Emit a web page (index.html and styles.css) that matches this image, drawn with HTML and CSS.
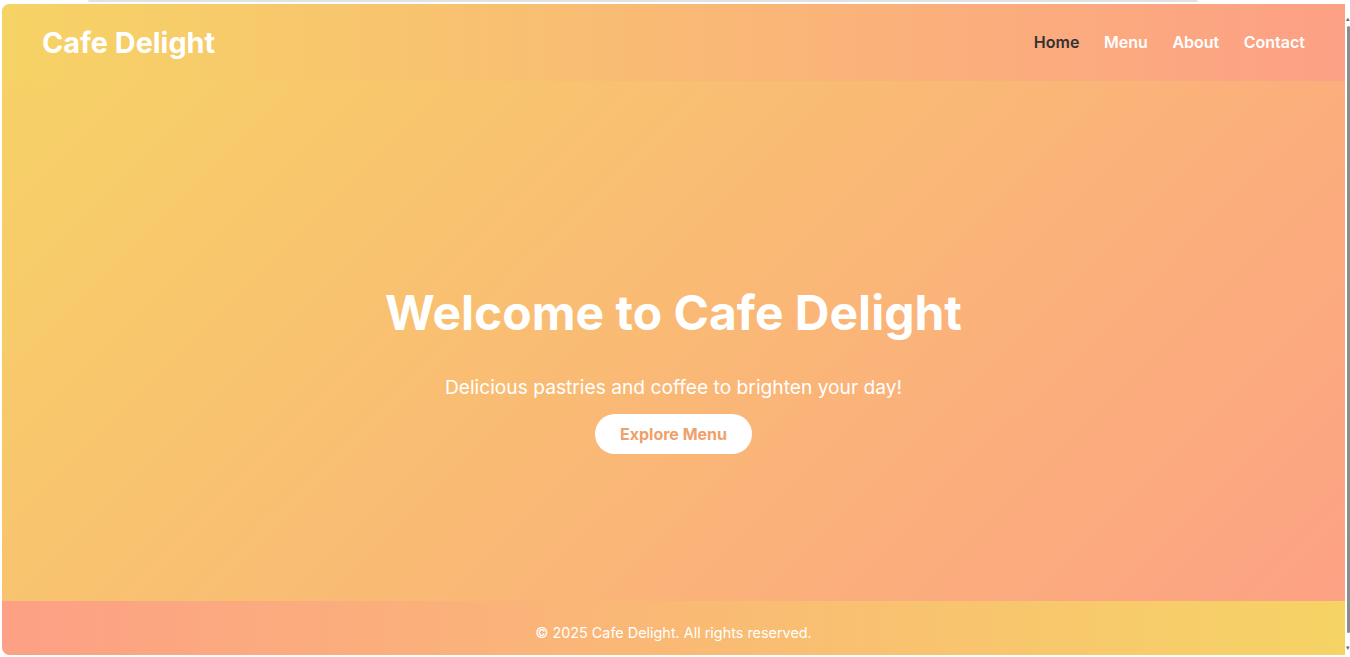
FILE: index.html
```html
<!DOCTYPE html>
<html lang="en">
<head>
<meta charset="utf-8">
<title>Cafe Delight</title>
<link rel="stylesheet" href="styles.css">
</head>
<body>
<div class="topline"></div>
<div class="frame">
  <div class="page">
    <header class="site-header">
      <div class="logo">Cafe Delight</div>
      <nav class="nav">
        <a class="nav-link active" href="#">Home</a>
        <a class="nav-link" href="#">Menu</a>
        <a class="nav-link" href="#">About</a>
        <a class="nav-link" href="#">Contact</a>
      </nav>
    </header>
    <main class="hero">
      <div class="hero-content">
        <h1 class="hero-title">Welcome to Cafe Delight</h1>
        <p class="hero-sub">Delicious pastries and coffee to brighten your day!</p>
        <a class="btn" href="#">Explore Menu</a>
      </div>
    </main>
    <footer class="site-footer">
      <p class="copy">© 2025 Cafe Delight. All rights reserved.</p>
    </footer>
  </div>
  <div class="scrollbar">
    <span class="arrow">▴</span>
    <div class="thumb"></div>
    <span class="arrow">▾</span>
  </div>
</div>
</body>
</html>
```

FILE: styles.css
```css
* { box-sizing: border-box; }

html, body {
  margin: 0;
  padding: 0;
  background: #ffffff;
  height: 657px;
  overflow: hidden;
  font-family: Inter, "Noto Sans", sans-serif;
}

.topline {
  height: 2px;
  margin: 0 152px 0 88px;
  background: #e2e2e2;
  border-radius: 0 0 2px 2px;
}

.frame {
  display: flex;
  margin: 2px 0 0 2px;
  height: 651px;
}

.page {
  flex: 1;
  display: flex;
  flex-direction: column;
  border-radius: 8px 0 0 8px;
  overflow: hidden;
  background: linear-gradient(135deg, #f6d365 0%, #fda085 100%);
}

.site-header {
  height: 77px;
  flex: none;
  display: flex;
  align-items: center;
  justify-content: space-between;
  padding: 0 40px 2px;
  background: linear-gradient(90deg, #f6d365 0%, #fda085 100%);
}

.logo {
  color: #ffffff;
  font-size: 28.8px;
  font-weight: 700;
  padding-top: 2px;
}

.nav {
  display: flex;
  gap: 24.6px;
}

.nav-link {
  color: #ffffff;
  text-decoration: none;
  font-size: 16px;
  font-weight: 600;
}

.nav-link.active {
  color: #333333;
}

.hero {
  flex: 1;
  display: flex;
  flex-direction: column;
  align-items: center;
  justify-content: center;
  padding-top: 56px;
  text-align: center;
}

.hero-content {
  display: flex;
  flex-direction: column;
  align-items: center;
}

.hero-title {
  margin: 0 0 30px;
  color: #ffffff;
  font-size: 48px;
  line-height: 1.2;
  font-weight: 700;
}

.hero-sub {
  margin: 0 0 12px;
  color: #ffffff;
  font-size: 19.2px;
  line-height: 30px;
}

.btn {
  display: inline-block;
  height: 40px;
  line-height: 40px;
  padding: 0 25px;
  border-radius: 20px;
  background: #ffffff;
  color: #f0a06a;
  font-size: 16px;
  font-weight: 700;
  text-decoration: none;
}

.site-footer {
  height: 54px;
  flex: none;
  padding-top: 21px;
  text-align: center;
  background: linear-gradient(90deg, #fda085 0%, #f6d365 100%);
}

.copy {
  margin: 0;
  color: #ffffff;
  font-size: 14.4px;
  line-height: 21px;
}

.scrollbar {
  width: 4px;
  flex: none;
  margin-left: 1px;
  display: flex;
  flex-direction: column;
  align-items: flex-end;
  background: #ffffff;
}

.arrow {
  font-size: 7px;
  line-height: 10px;
  color: #666666;
  height: 22px;
  padding-top: 10px;
}

.thumb {
  flex: 1;
  width: 3px;
  background: #8c8c8c;
  border-radius: 2px;
}
```
